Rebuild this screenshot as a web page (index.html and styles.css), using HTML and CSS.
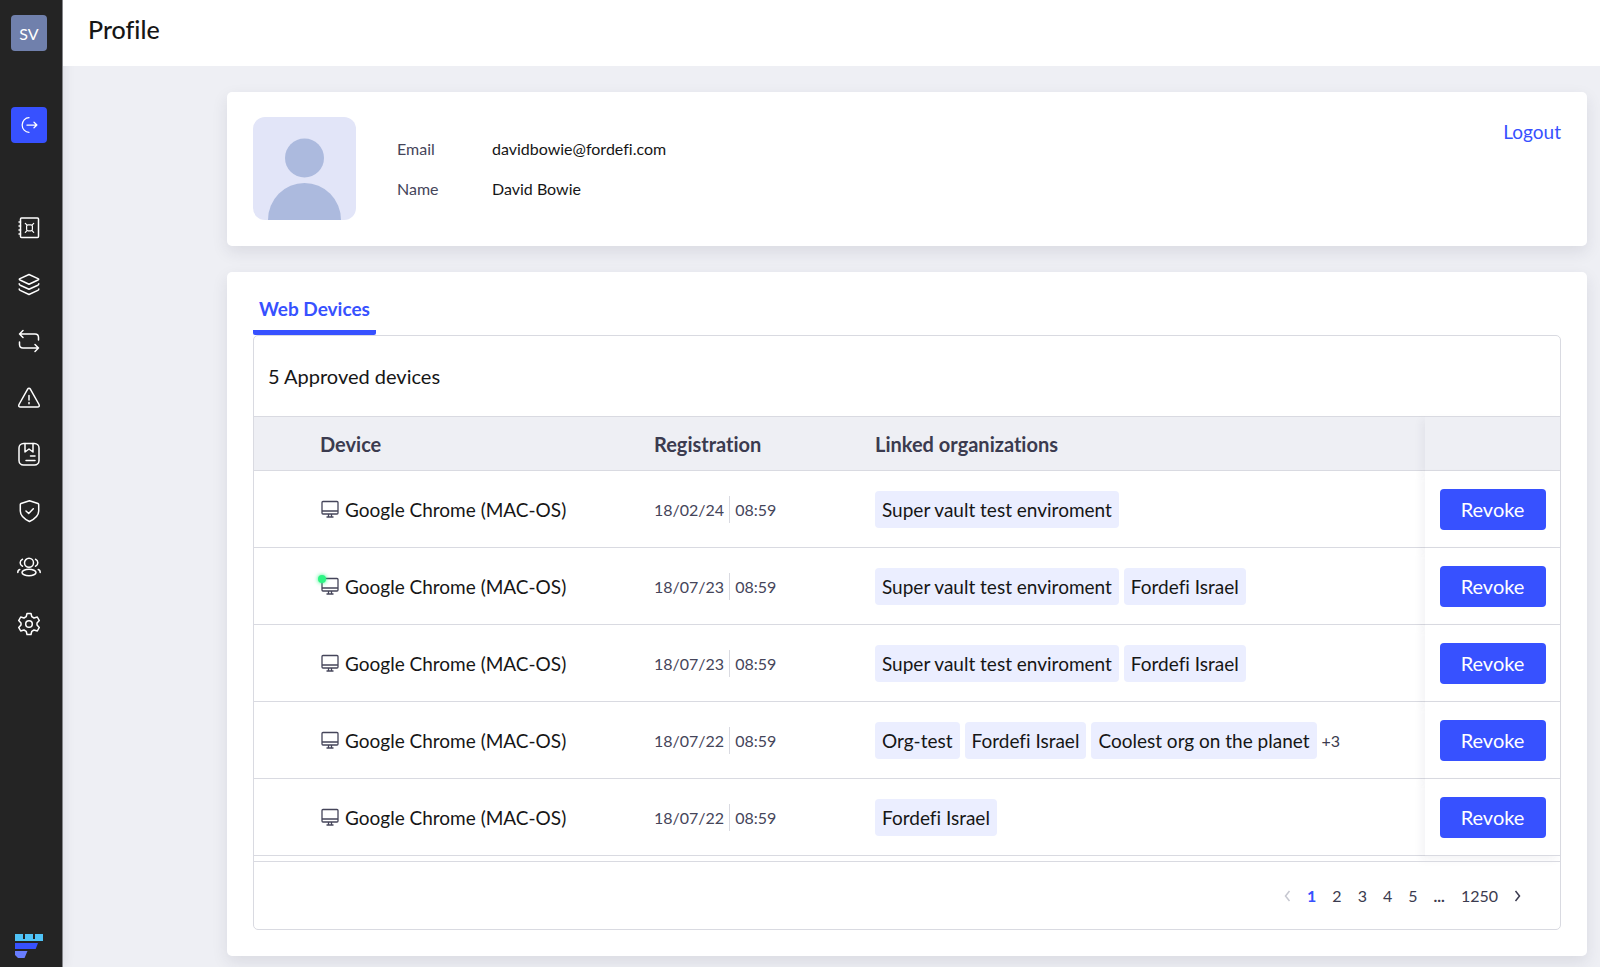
FILE: index.html
```html
<!DOCTYPE html>
<html lang="en">
<head>
<meta charset="utf-8">
<meta name="viewport" content="width=device-width, initial-scale=1">
<title>Profile</title>
<link rel="stylesheet" href="styles.css">
</head>
<body>
<svg class="sprite" aria-hidden="true">
  <symbol id="monitor" viewBox="0 0 18 18">
    <rect x="1" y="1.500" width="16" height="12.500" rx="1"/>
    <path d="M1 11h16M7.500 14v3M10.500 14v3M5.500 17h7"/>
  </symbol>
</svg>
<div class="app">
  <aside class="sidebar">
    <button class="square workspace" type="button">SV</button>
    <a class="square switch" href="#" aria-label="Switch organization">
      <svg class="icon" viewBox="0 0 24 24"><path d="M12 3.200A8.200 8.800 0 0 0 12 20.800M9.500 12h12M18 8.700l3.500 3.300-3.500 3.300"/></svg>
    </a>
    <nav class="menu" aria-label="Main">
      <a href="#" aria-label="Vaults"><svg class="icon" viewBox="0 0 24 24"><rect x="3.500" y="2" width="18" height="19.500" rx="1"/><path d="M3.500 6H2M3.500 10H2M3.500 14H2M3.500 18H2"/><path class="thin" d="M8.300 7.300l1.500 1.500M16.700 7.300l-1.500 1.500M8.300 16.300l1.500-1.500M16.700 16.300l-1.500-1.500"/><rect class="thin" x="9.600" y="8.800" width="5.800" height="6" rx="1.500"/></svg></a>
      <a href="#" aria-label="Assets"><svg class="icon" viewBox="0 0 24 24"><path d="M12 1.500L21 5.600q1.400.700 0 1.400L12 11.200 3 7q-1.400-.700 0-1.400zM2.200 10.800q0 1 1 1.400L12 16.300l8.800-4.100q1-.400 1-1.400M2.200 16q0 1 1 1.400L12 21.500l8.800-4.100q1-.400 1-1.400"/></svg></a>
      <a href="#" aria-label="Transactions"><svg class="icon" viewBox="0 0 24 24"><path d="M6 1.500L2.500 5 6 8.500M2.500 5H18q3.500 0 3.500 3.500V11M18 15.500l3.500 3.500-3.500 3.500M21.500 19H6q-3.500 0-3.500-3.500V13"/></svg></a>
      <a href="#" aria-label="Alerts"><svg class="icon" viewBox="0 0 24 24"><path d="M10.500 3.300Q12 1.200 13.500 3.300L22 18.500q1 2.500-1.500 2.500h-17Q1 21 2 18.500zM12 9.500v4.500M12 16.500v1.300"/></svg></a>
      <a href="#" aria-label="Address book"><svg class="icon" viewBox="0 0 24 24"><rect x="2" y="1.500" width="20" height="21.500" rx="4.500"/><path d="M8 1.500V10l4-3 4 3V1.500M13.500 14H18M9 18.500h9"/></svg></a>
      <a href="#" aria-label="Policies"><svg class="icon" viewBox="0 0 24 24"><path d="M12.500 1.700L21 4.500q.700.300.700 1V12c0 5-4 8-9.200 10.500C7.300 20 3.300 17 3.300 12V5.500q0-.700.700-1zM9 12l2.700 2.500L16.300 9.800"/></svg></a>
      <a href="#" aria-label="Users"><svg class="icon" viewBox="0 0 24 24"><circle cx="12" cy="7.800" r="4.500"/><ellipse cx="12" cy="17.500" rx="7" ry="3.200"/><path d="M5.500 4.300a3.800 3.800 0 0 0 0 7M18.500 4.300a3.800 3.800 0 0 1 0 7M2.800 14.500Q.800 15 .800 17.500M21.200 14.500q2 .500 2 3"/></svg></a>
      <a href="#" aria-label="Settings"><svg class="icon" viewBox="0 0 24 24"><path d="M10 1.500h4l.8 3.200 2.200 1.300 3.300-1 2 3.600L20 11v2l2.300 2.400-2 3.600-3.300-1-2.200 1.300-.8 3.200h-4l-.8-3.200L7 18l-3.300 1-2-3.600L4 13v-2L1.700 8.600l2-3.600L7 6l2.200-1.300z"/><circle cx="12" cy="12" r="3.300"/></svg></a>
    </nav>
    <svg class="logo" viewBox="0 0 28 24" aria-hidden="true">
      <path fill="#4fc3f7" d="M0 0h8v5h2V0h8v5h2V0h8v7H0z"/>
      <path fill="#3751ff" d="M0 9h23l-2.300 6H0z"/>
      <path fill="#687dff" d="M0 17h12.500L9.500 24H3L0 21z"/>
    </svg>
  </aside>

  <div class="page">
    <header class="topbar"><h1>Profile</h1></header>
    <main class="content">
      <section class="card profile">
        <svg class="avatar" viewBox="0 0 103 103" role="img" aria-label="User picture">
          <rect width="103" height="103" rx="12" fill="#e2e5f8"/>
          <circle cx="51.500" cy="41" r="19.500" fill="#acbade"/>
          <path d="M15 103a36.500 37 0 0 1 73 0z" fill="#acbade"/>
        </svg>
        <dl class="facts">
          <dt>Email</dt><dd>davidbowie@fordefi.com</dd>
          <dt>Name</dt><dd>David Bowie</dd>
        </dl>
        <a class="logout" href="#">Logout</a>
      </section>

      <section class="card devices">
        <div role="tablist"><button class="tab" type="button" role="tab" aria-selected="true">Web Devices</button></div>
        <div class="panel">
          <h2>5 Approved devices</h2>
          <table>
            <colgroup><col class="col-device"><col class="col-date"><col><col class="col-action"></colgroup>
            <thead>
              <tr><th scope="col">Device</th><th scope="col">Registration</th><th scope="col">Linked organizations</th><th class="action"></th></tr>
            </thead>
            <tbody>
              <tr>
                <td><div class="device"><span class="glyph"><svg><use href="#monitor"/></svg></span>Google Chrome (MAC-OS)</div></td>
                <td><div class="date"><span>18/02/24</span><span class="time">08:59</span></div></td>
                <td><div class="tags"><span class="tag">Super vault test enviroment</span></div></td>
                <td class="action"><button class="revoke" type="button">Revoke</button></td>
              </tr>
              <tr>
                <td><div class="device"><span class="glyph online"><svg><use href="#monitor"/></svg></span>Google Chrome (MAC-OS)</div></td>
                <td><div class="date"><span>18/07/23</span><span class="time">08:59</span></div></td>
                <td><div class="tags"><span class="tag">Super vault test enviroment</span><span class="tag">Fordefi Israel</span></div></td>
                <td class="action"><button class="revoke" type="button">Revoke</button></td>
              </tr>
              <tr>
                <td><div class="device"><span class="glyph"><svg><use href="#monitor"/></svg></span>Google Chrome (MAC-OS)</div></td>
                <td><div class="date"><span>18/07/23</span><span class="time">08:59</span></div></td>
                <td><div class="tags"><span class="tag">Super vault test enviroment</span><span class="tag">Fordefi Israel</span></div></td>
                <td class="action"><button class="revoke" type="button">Revoke</button></td>
              </tr>
              <tr>
                <td><div class="device"><span class="glyph"><svg><use href="#monitor"/></svg></span>Google Chrome (MAC-OS)</div></td>
                <td><div class="date"><span>18/07/22</span><span class="time">08:59</span></div></td>
                <td><div class="tags"><span class="tag">Org-test</span><span class="tag">Fordefi Israel</span><span class="tag">Coolest org on the planet</span><span class="more">+3</span></div></td>
                <td class="action"><button class="revoke" type="button">Revoke</button></td>
              </tr>
              <tr>
                <td><div class="device"><span class="glyph"><svg><use href="#monitor"/></svg></span>Google Chrome (MAC-OS)</div></td>
                <td><div class="date"><span>18/07/22</span><span class="time">08:59</span></div></td>
                <td><div class="tags"><span class="tag">Fordefi Israel</span></div></td>
                <td class="action"><button class="revoke" type="button">Revoke</button></td>
              </tr>
            </tbody>
          </table>
          <nav class="pager" aria-label="Pagination">
            <button type="button" disabled aria-label="Previous page"><svg viewBox="0 0 7 12"><path d="M5.500 1L1.500 6l4 5"/></svg></button>
            <button type="button" class="current" aria-current="page">1</button>
            <button type="button">2</button>
            <button type="button">3</button>
            <button type="button">4</button>
            <button type="button">5</button>
            <span class="dots">...</span>
            <button type="button">1250</button>
            <button type="button" aria-label="Next page"><svg viewBox="0 0 7 12"><path d="M1.500 1l4 5-4 5"/></svg></button>
          </nav>
        </div>
      </section>
    </main>
  </div>
</div>
</body>
</html>
```
FILE: styles.css
```css
* { box-sizing: border-box; }

body {
  margin: 0;
  background: #eeeff4;
  color: #161616;
  font-family: Lato, "Open Sans", sans-serif;
  font-size: 19px;
  font-variant-ligatures: none;
}

button {
  padding: 0;
  border: 0;
  background: none;
  color: inherit;
  font: inherit;
  font-variant-ligatures: none;
  cursor: pointer;
}

a { text-decoration: none; }

.sprite { display: none; }

.app {
  display: flex;
  min-height: 100vh;
}

.sidebar {
  display: flex;
  flex: none;
  flex-direction: column;
  width: 63px;
  padding: 15px 15px 9px 11px;
  border-right: 1px solid #85868a;
  background: #242424;
  box-shadow: 2px 0 10px rgba(40, 44, 70, 0.08);
}

.square {
  display: flex;
  align-items: center;
  justify-content: center;
  width: 36px;
  height: 36px;
  border-radius: 4px;
  color: #fff;
}

.workspace {
  background: #7080ac;
  font-size: 16px;
}

.switch {
  margin-top: 56px;
  background: #3751ff;
}

.icon {
  width: 24px;
  height: 24px;
  fill: none;
  stroke: currentColor;
  stroke-width: 1.5;
  stroke-linecap: round;
  stroke-linejoin: round;
}

.thin { stroke-width: 1.2; }

.switch .icon {
  width: 20px;
  height: 20px;
}

.menu {
  display: flex;
  flex-direction: column;
  align-items: center;
  justify-content: space-between;
  height: 420px;
  margin: 73px 0 32px;
}

.menu a {
  display: block;
  height: 24px;
  color: #fff;
}

.logo {
  width: 28px;
  height: 24px;
  margin: auto 0 0 4px;
}

.page {
  display: flex;
  flex: 1;
  flex-direction: column;
  min-width: 0;
}

.topbar {
  height: 66px;
  padding: 13px 25px;
  background: #fff;
}

h1 {
  margin: 0;
  font-size: 25px;
  font-weight: 500;
  line-height: 32px;
}

.content {
  display: grid;
  gap: 26px;
  padding: 26px 13px 11px 164px;
}

.card {
  min-width: 0;
  padding: 26px;
  border-radius: 5px;
  background: #fff;
  box-shadow: 0 6px 16px rgba(40, 44, 70, 0.1);
}

.profile {
  display: flex;
  align-items: flex-start;
  padding-top: 25px;
}

.avatar {
  flex: none;
  width: 103px;
  height: 103px;
}

.facts {
  display: grid;
  grid-template-columns: 95px auto;
  row-gap: 16px;
  margin: 20px 0 0 41px;
  font-size: 16px;
  line-height: 24px;
}

.facts dt { color: #45455a; }

.facts dd { margin: 0; }

.logout {
  margin-left: auto;
  color: #3751ff;
  line-height: 30px;
}

.devices { padding-top: 25px; }

.tab {
  display: block;
  padding: 0 6px 9px;
  border-bottom: 5px solid #3751ff;
  border-radius: 2px;
  color: #3751ff;
  font-weight: 700;
  line-height: 24px;
}

.panel {
  border: 1px solid #d9dae1;
  border-radius: 5px;
}

h2 {
  margin: 0;
  padding: 0 14px;
  font-size: 20px;
  font-weight: 400;
  line-height: 80px;
}

table {
  width: 100%;
  margin-bottom: 5px;
  border-spacing: 0;
  table-layout: fixed;
}

.col-device { width: 400px; }
.col-date { width: 221px; }
.col-action { width: 135px; }

th {
  height: 55px;
  padding: 0;
  border-top: 1px solid #d9dae1;
  border-bottom: 1px solid #d9dae1;
  background: #eeeff4;
  color: #3b3b4f;
  font-size: 20px;
  font-weight: 700;
  text-align: left;
}

th:first-child { padding-left: 66px; }

td {
  height: 77px;
  padding: 0;
  border-bottom: 1px solid #d9dae1;
}

td:first-child { padding-left: 67px; }

td.action {
  background: #fff;
  text-align: center;
}

.action { box-shadow: -4px 4px 8px rgba(40, 44, 70, 0.05); }

.device {
  display: flex;
  gap: 6px;
  align-items: center;
}

.glyph {
  position: relative;
  display: flex;
}

.glyph svg {
  width: 18px;
  height: 18px;
  fill: none;
  stroke: #45455a;
  stroke-width: 1.3;
}

.online::before {
  position: absolute;
  top: -2px;
  left: -3px;
  width: 8px;
  height: 8px;
  border-radius: 50%;
  background: #2df584;
  box-shadow: 0 0 4px #2df584;
  content: "";
}

.date {
  display: flex;
  align-items: center;
  color: #45455a;
  font-size: 16px;
}

.time {
  margin-left: 5px;
  padding-left: 5px;
  border-left: 1px solid #d9dae1;
  line-height: 27px;
}

.tags {
  display: flex;
  gap: 5px;
  align-items: center;
  white-space: nowrap;
}

.tag {
  padding: 0 7px;
  border-radius: 4px;
  background: #ebeeff;
  line-height: 37px;
}

.more {
  color: #3b3b4f;
  font-size: 16px;
}

.revoke {
  width: 106px;
  height: 41px;
  border-radius: 4px;
  background: #3751ff;
  color: #fff;
  font-size: 20px;
}

.pager {
  display: flex;
  gap: 16px;
  align-items: center;
  justify-content: flex-end;
  height: 68px;
  padding-right: 39px;
  border-top: 1px solid #d9dae1;
  color: #3b3b4f;
  font-size: 16px;
}

.pager svg {
  display: block;
  width: 7px;
  height: 12px;
  fill: none;
  stroke: currentColor;
  stroke-width: 1.5;
}

.pager :disabled { color: #c6c7d0; }

.current {
  color: #3751ff;
  font-weight: 700;
}

.dots { font-weight: 700; }
```
